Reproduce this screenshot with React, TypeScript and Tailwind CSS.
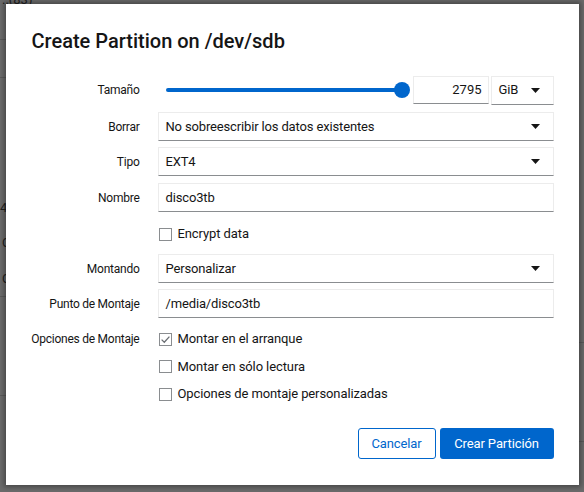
import React from "react";

function Caret() {
  return (
    <svg width="9" height="5" viewBox="0 0 9 5" className="shrink-0">
      <path d="M0 0h9L4.5 5z" fill="#151515" />
    </svg>
  );
}

function Select({ value }: { value: string }) {
  return (
    <div className="flex h-[29px] items-center justify-between border border-[#ececec] border-b-[#8a8d90] bg-white pl-[7px] pr-[13px] text-[13px] tracking-[-0.15px] text-[#151515]">
      <span>{value}</span>
      <Caret />
    </div>
  );
}

function TextInput({ value }: { value: string }) {
  return (
    <div className="flex h-[29px] items-center border border-[#ececec] border-b-[#8a8d90] bg-white px-[7px] text-[13px] tracking-[-0.15px] text-[#151515]">
      {value}
    </div>
  );
}

function Checkbox({ checked = false, label, h = "h-[28px]" }: { checked?: boolean; label: string; h?: string }) {
  return (
    <div className={"flex items-center gap-[6px] text-[13px] tracking-[-0.1px] text-[#151515] " + h}>
      <span className="ml-[1px] flex h-[13px] w-[13px] shrink-0 items-center justify-center border border-[#8a8d90] bg-white">
        {checked && (
          <svg width="11" height="11" viewBox="0 0 11 11">
            <path d="M1.6 5.6 L4.3 8.3 L9.4 2.6" fill="none" stroke="#6a6e73" strokeWidth="1.3" />
          </svg>
        )}
      </span>
      <span>{label}</span>
    </div>
  );
}

function Label({ text, className = "" }: { text: string; className?: string }) {
  return (
    <div
      className={
        "flex w-[110px] shrink-0 justify-end whitespace-nowrap text-[12px] tracking-[-0.25px] text-[#151515] " + className
      }
    >
      {text}
    </div>
  );
}

function Row({ label, children, className = "" }: { label: string; children?: React.ReactNode; className?: string }) {
  return (
    <div className={"flex items-center " + className}>
      <Label text={label} />
      <div className="ml-[18px] flex-1">{children}</div>
    </div>
  );
}

export default function App() {
  return (
    <div className="relative h-[492px] w-[584px] overflow-hidden bg-[#6b6b6b] font-[family-name:Roboto,'Liberation_Sans',sans-serif]">
      {/* dimmed page behind */}
      <div className="flex justify-between text-[13px] leading-[18px] text-[#1e1e1e]">
        <div className="flex w-[40px] flex-col">
          <div className="-mt-[9px] h-[49px] whitespace-nowrap border-b border-[#5a5a5a] pl-[2px]">..(83)</div>
          <div className="h-[38px] border-b border-[#5a5a5a]" />
          <div className="h-[121px]" />
          <div className="h-[35px]">43</div>
          <div className="h-[36px] pl-[2px]">C</div>
          <div className="h-[27px] border-b border-[#5a5a5a] pl-[2px]">C</div>
          <div className="h-[99px] border-b border-[#5a5a5a]" />
        </div>
        <div className="flex w-[20px] flex-col">
          <div className="h-[343px] border-b border-[#5a5a5a]" />
          <div className="h-[99px] border-b border-[#5a5a5a]" />
        </div>
      </div>

      {/* overlay with modal */}
      <div className="absolute inset-0 flex items-start justify-center pt-[4px]">
        <div className="flex h-[481px] w-[573px] flex-col bg-white pl-[24px] pr-[25px] pt-[23px] shadow-[0_0_5px_2px_rgba(0,0,0,0.35)]">
          <h1 className="ml-[2px] text-[20px] font-medium leading-[28px] text-[#151515]">Create Partition on /dev/sdb</h1>

          <div className="mt-[21px] flex flex-col">
            <Row label="Tamaño">
              <div className="flex h-[28px] items-center">
                <div className="relative flex h-full flex-1 items-center pl-[8px] pr-[10px]">
                  <div className="h-[4px] flex-1 rounded-full bg-[#0066cc]" />
                  <div className="absolute right-[3px] top-1/2 h-[16px] w-[16px] -translate-y-1/2 rounded-full bg-[#0066cc]" />
                </div>
                <div className="w-[76px]">
                  <div className="flex h-[28px] items-center justify-end border border-[#ececec] border-b-[#8a8d90] bg-white pr-[6px] text-[13px] text-[#151515]">
                    2795
                  </div>
                </div>
                <div className="ml-[2px] w-[63px]">
                  <Select value="GiB" />
                </div>
              </div>
            </Row>
            <Row label="Borrar" className="mt-[8px]">
              <Select value="No sobreescribir los datos existentes" />
            </Row>
            <Row label="Tipo" className="mt-[6px]">
              <Select value="EXT4" />
            </Row>
            <Row label="Nombre" className="mt-[7px]">
              <TextInput value="disco3tb" />
            </Row>
            <Row label="" className="mt-[6px] h-[32px]">
              <Checkbox label="Encrypt data" />
            </Row>
            <Row label="Montando" className="mt-[4px]">
              <Select value="Personalizar" />
            </Row>
            <Row label="Punto de Montaje" className="mt-[6px]">
              <TextInput value="/media/disco3tb" />
            </Row>
            <div className="mt-[7px] flex items-start">
              <Label text="Opciones de Montaje" className="h-[28px] items-center" />
              <div className="ml-[18px] flex flex-1 flex-col">
                <Checkbox checked label="Montar en el arranque" />
                <Checkbox label="Montar en sólo lectura" h="h-[27px]" />
                <Checkbox label="Opciones de montaje personalizadas" />
              </div>
            </div>
          </div>

          <div className="mt-[20px] flex justify-end gap-[4px]">
            <button className="h-[31px] w-[78px] rounded-[3px] border border-[#0066cc] bg-white text-[13px] tracking-[-0.1px] text-[#0066cc]">
              Cancelar
            </button>
            <button className="h-[31px] w-[114px] rounded-[3px] bg-[#0066cc] text-[13px] tracking-[-0.1px] text-white">
              Crear Partición
            </button>
          </div>
        </div>
      </div>
    </div>
  );
}
